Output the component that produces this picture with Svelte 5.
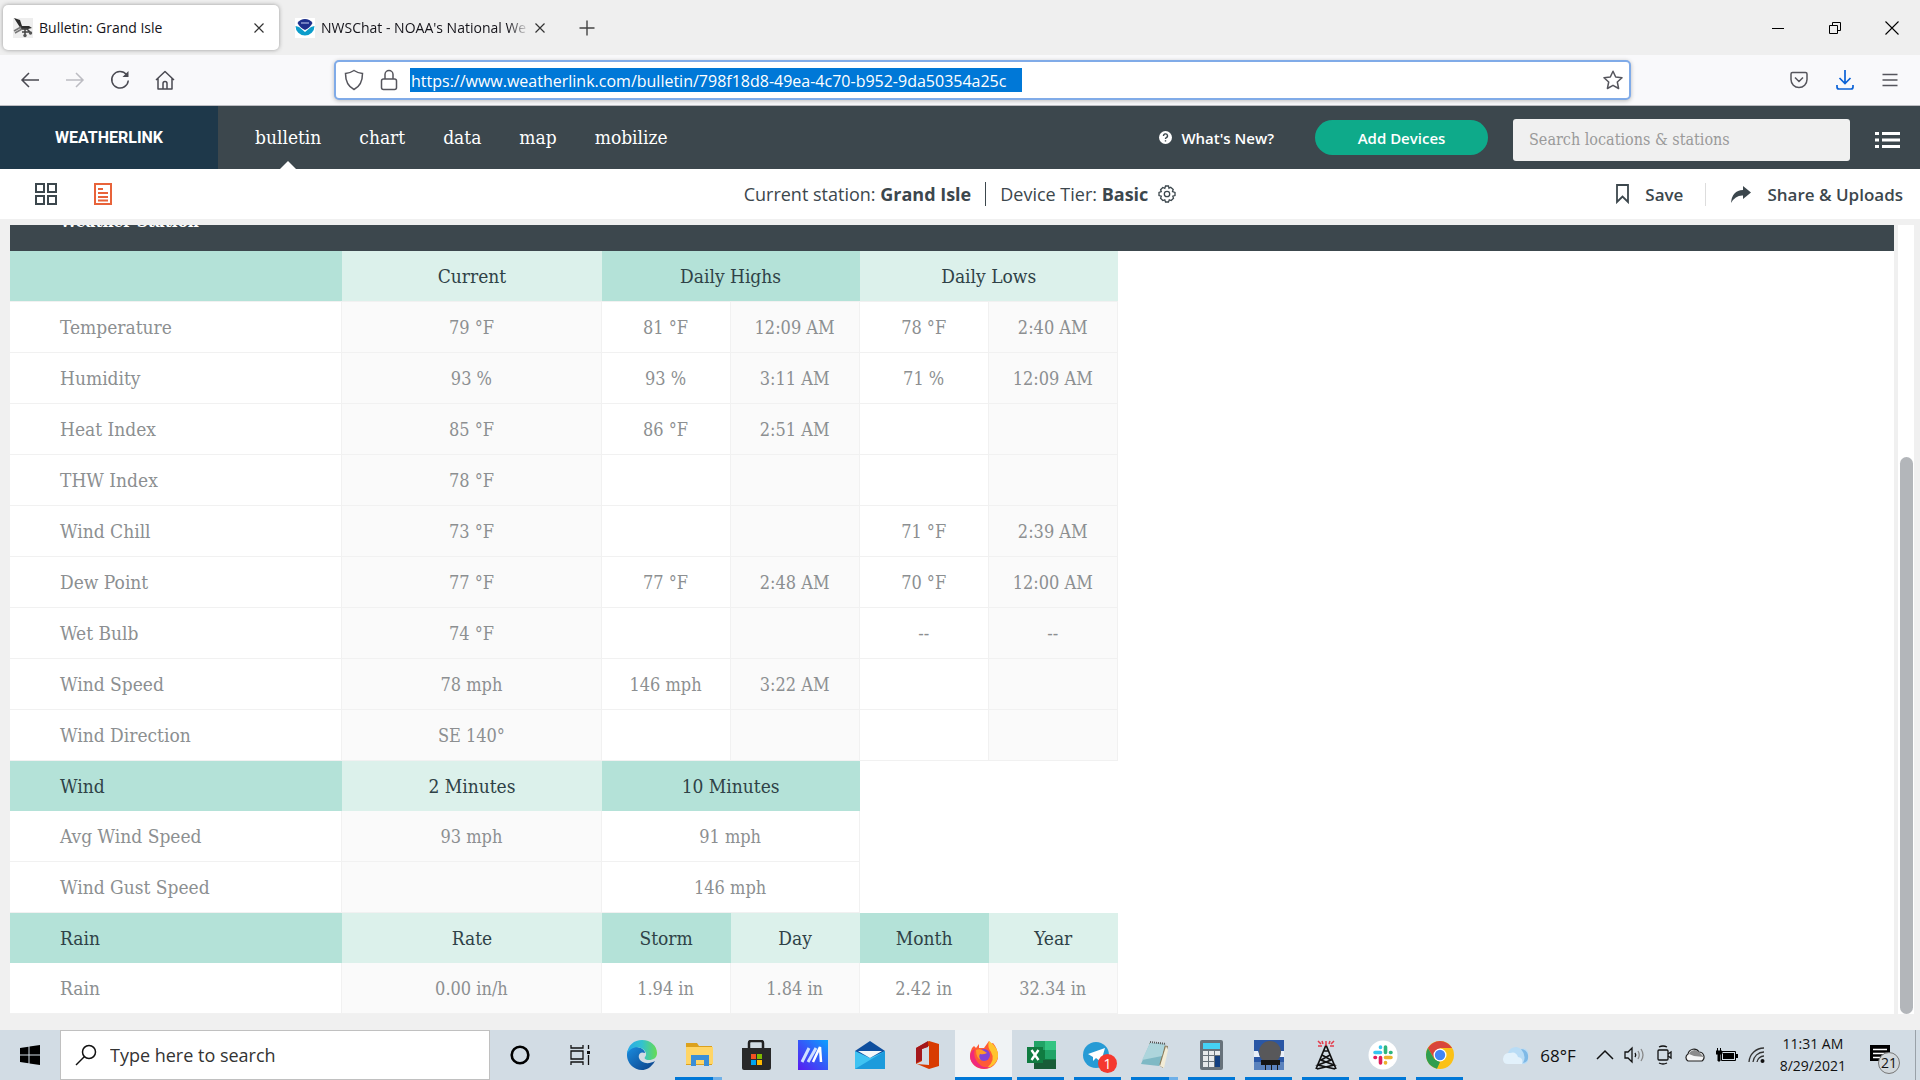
<script lang="ts">
	type Row = { label: string; cells: string[] };

	const navLinks = ['bulletin', 'chart', 'data', 'map', 'mobilize'];

	const conditions: Row[] = [
		{ label: 'Temperature', cells: ['79 °F', '81 °F', '12:09 AM', '78 °F', '2:40 AM'] },
		{ label: 'Humidity', cells: ['93 %', '93 %', '3:11 AM', '71 %', '12:09 AM'] },
		{ label: 'Heat Index', cells: ['85 °F', '86 °F', '2:51 AM', '', ''] },
		{ label: 'THW Index', cells: ['78 °F', '', '', '', ''] },
		{ label: 'Wind Chill', cells: ['73 °F', '', '', '71 °F', '2:39 AM'] },
		{ label: 'Dew Point', cells: ['77 °F', '77 °F', '2:48 AM', '70 °F', '12:00 AM'] },
		{ label: 'Wet Bulb', cells: ['74 °F', '', '', '--', '--'] },
		{ label: 'Wind Speed', cells: ['78 mph', '146 mph', '3:22 AM', '', ''] },
		{ label: 'Wind Direction', cells: ['SE 140°', '', '', '', ''] }
	];

	const wind: Row[] = [
		{ label: 'Avg Wind Speed', cells: ['93 mph', '91 mph'] },
		{ label: 'Wind Gust Speed', cells: ['', '146 mph'] }
	];

	const rainHeads = ['Rate', 'Storm', 'Day', 'Month', 'Year'];
	const rain = ['0.00 in/h', '1.94 in', '1.84 in', '2.42 in', '32.34 in'];

	// open: underline below the icon, group: several windows, active: focused window
	const apps = [
		{ id: 'edge', name: 'Edge', state: '' },
		{ id: 'files', name: 'File Explorer', state: 'open group' },
		{ id: 'store', name: 'Store', state: '' },
		{ id: 'myasus', name: 'MyASUS', state: '' },
		{ id: 'mail', name: 'Mail', state: '' },
		{ id: 'office', name: 'Office', state: '' },
		{ id: 'firefox', name: 'Firefox', state: 'open active' },
		{ id: 'excel', name: 'Excel', state: 'open' },
		{ id: 'telegram', name: 'Telegram', state: 'open' },
		{ id: 'notepad', name: 'Notepad', state: 'open group' },
		{ id: 'calc', name: 'Calculator', state: 'open' },
		{ id: 'radar', name: 'Radar', state: 'open' },
		{ id: 'tower', name: 'Tower', state: 'open' },
		{ id: 'slack', name: 'Slack', state: 'open' },
		{ id: 'chrome', name: 'Chrome', state: 'open' }
	];

	let url = $state('https://www.weatherlink.com/bulletin/798f18d8-49ea-4c70-b952-9da50354a25c');
	let query = $state('');
</script>

<div class="screen">
	<header class="tabs">
		<div class="tab active">
			<svg width="20" height="20" viewBox="0 0 20 20" aria-hidden="true">
				<rect width="20" height="20" fill="#eee" />
				<path d="M1 0 7 2 9 8 16 8 19 10 13 11.500 8 11Z" fill="#2c2c2c" />
				<path d="M9 11 2 15M8 9 1 13" stroke="#777" stroke-width="1.500" fill="none" />
				<path d="M9 11H14L17 14M12 11V17M9 14H17" stroke="#444" stroke-width="1.500" fill="none" />
				<circle cx="12" cy="17.500" r="1.700" fill="#555" /><circle cx="17.500" cy="15" r="1.700" fill="#555" />
			</svg>
			<span class="title">Bulletin: Grand Isle</span>
			<button class="plain" aria-label="Close tab">
				<svg width="10" height="10" viewBox="0 0 10 10"><path d="M.5 .5 9.500 9.500M9.500 .5 .5 9.500" stroke="#333" stroke-width="1.200" /></svg>
			</button>
		</div>
		<div class="tab">
			<svg width="20" height="20" viewBox="0 0 20 20" aria-hidden="true">
				<rect width="20" height="20" fill="#fff" />
				<path d="M2.500 5A9 9 0 0 1 17.500 5Q15 10 10 12Q5 10 2.500 5Z" fill="#1d2f8c" />
				<path d="M.5 8 4 9 10 14 16 9 19.500 8A9.500 9.500 0 0 1 .5 8Z" fill="#0c9dcb" />
				<path d="M6 5H14" stroke="#8d9ad0" stroke-width="1.500" />
			</svg>
			<span class="title fade">NWSChat - NOAA's National We</span>
			<button class="plain" aria-label="Close tab">
				<svg width="10" height="10" viewBox="0 0 10 10"><path d="M.5 .5 9.500 9.500M9.500 .5 .5 9.500" stroke="#333" stroke-width="1.200" /></svg>
			</button>
		</div>
		<button class="plain new" aria-label="New tab">
			<svg width="16" height="16" viewBox="0 0 16 16"><path d="M8 .5V15.500M.5 8H15.500" stroke="#444" stroke-width="1.400" /></svg>
		</button>
		<div class="window">
			<button class="plain" aria-label="Minimize">
				<svg width="14" height="14" viewBox="0 0 14 14"><path d="M1 7.500H13" stroke="#000" /></svg>
			</button>
			<button class="plain" aria-label="Restore">
				<svg width="14" height="14" viewBox="0 0 14 14"><path d="M1.500 4.500H9.500V12.500H1.500ZM4.500 4V1.500H12.500V9.500H10" stroke="#000" fill="none" /></svg>
			</button>
			<button class="plain" aria-label="Close">
				<svg width="14" height="14" viewBox="0 0 14 14"><path d="M.5 .5 13.500 13.500M13.500 .5 .5 13.500" stroke="#000" stroke-width="1.100" /></svg>
			</button>
		</div>
	</header>

	<div class="toolbar">
		<div class="history">
			<button class="plain" aria-label="Back">
				<svg width="20" height="20" viewBox="0 0 20 20" fill="none" stroke="#4a4a52" stroke-width="1.500"><path d="M19 10H2M9 3 2 10 9 17" /></svg>
			</button>
			<button class="plain" aria-label="Forward" disabled>
				<svg width="20" height="20" viewBox="0 0 20 20" fill="none" stroke="#bcbcc2" stroke-width="1.500"><path d="M1 10H18M11 3 18 10 11 17" /></svg>
			</button>
			<button class="plain" aria-label="Reload">
				<svg width="20" height="20" viewBox="0 0 20 20" fill="none" stroke="#4a4a52" stroke-width="1.500"><path d="M16.500 4.500A8.300 8.300 0 1 0 18.300 10.500" /><path d="M18.500 1V7H12.500Z" fill="#4a4a52" stroke="none" /></svg>
			</button>
			<button class="plain" aria-label="Home">
				<svg width="20" height="20" viewBox="0 0 20 20" fill="none" stroke="#4a4a52" stroke-width="1.500" stroke-linejoin="round"><path d="M1 10 10 1.500 19 10M3 8.500V19H17V8.500M8 19V13.500A2 2 0 0 1 12 13.500V19" /></svg>
			</button>
		</div>
		<div class="address">
			<svg width="20" height="22" viewBox="0 0 20 22" fill="none" stroke="#55555c" stroke-width="1.500" aria-hidden="true"><path d="M10 1.500C7 3.500 4 4.300 1.500 4.500C1.500 12 4 17.500 10 20.500C16 17.500 18.500 12 18.500 4.500C16 4.300 13 3.500 10 1.500Z" /></svg>
			<svg width="18" height="22" viewBox="0 0 18 22" fill="none" stroke="#55555c" stroke-width="1.500" aria-hidden="true"><rect x="1.500" y="10" width="15" height="10.500" rx="2" /><path d="M5 10V5.500A4 4 0 0 1 13 5.500V10" /></svg>
			<div class="url"><input aria-label="Address" bind:value={url} /></div>
			<button class="plain" aria-label="Bookmark this page">
				<svg width="20" height="20" viewBox="0 0 20 20" fill="none" stroke="#55555c" stroke-width="1.500" stroke-linejoin="round"><path d="M10 1.300 12.700 7 19 7.800 14.300 12 15.600 18.500 10 15.300 4.400 18.500 5.700 12 1 7.800 7.300 7Z" /></svg>
			</button>
		</div>
		<div class="tools">
			<button class="plain" aria-label="Pocket">
				<svg width="18" height="18" viewBox="0 0 18 18" fill="none" stroke="#55555c" stroke-width="1.500"><path d="M2.500 1.500H15.500Q17 1.500 17 3V8.500A8 8 0 0 1 1 8.500V3Q1 1.500 2.500 1.500ZM5 6.500 9 10.500 13 6.500" /></svg>
			</button>
			<button class="plain" aria-label="Downloads">
				<svg width="18" height="20" viewBox="0 0 18 20" fill="none" stroke="#0a62d6" stroke-width="1.700"><path d="M9 0V13M3.500 8 9 13.500 14.500 8M1 15V17Q1 19 3 19H15Q17 19 17 17V15" /></svg>
			</button>
			<button class="plain" aria-label="Menu">
				<svg width="16" height="14" viewBox="0 0 16 14" stroke="#55555c" stroke-width="1.300"><path d="M.5 1.500H15.500M.5 7H15.500M.5 12.500H15.500" /></svg>
			</button>
		</div>
	</div>

	<nav class="site">
		<a class="brand" href="#home">WEATHERLINK</a>
		<div class="links">
			{#each navLinks as link, i}
				<a href="#{link}" class:current={i === 0}>{link}</a>
			{/each}
		</div>
		<a class="news" href="#news">
			<svg width="13" height="13" viewBox="0 0 13 13" aria-hidden="true"><circle cx="6.500" cy="6.500" r="6.500" fill="#fff" /><path d="M4.500 5A2 2 0 1 1 7 6.800Q6.500 7 6.500 8M6.500 9.200V10.500" fill="none" stroke="#3c474d" stroke-width="1.400" /></svg>
			What's New?
		</a>
		<button class="add">Add Devices</button>
		<div class="lookup">
			<input class="search" aria-label="Search" placeholder="Search locations & stations" bind:value={query} />
			<button class="plain" aria-label="Station list">
				<svg width="25" height="16" viewBox="0 0 25 16" fill="#fff"><path d="M0 0H4V3H0ZM7 0H25V3H7ZM0 6.500H4V9.500H0ZM7 6.500H25V9.500H7ZM0 13H4V16H0ZM7 13H25V16H7Z" /></svg>
			</button>
		</div>
	</nav>

	<div class="subnav">
		<div class="views">
			<button class="plain" aria-label="Tiles">
				<svg width="22" height="22" viewBox="0 0 22 22" fill="none" stroke="#3c474d" stroke-width="2"><path d="M1 1H9V9H1ZM13 1H21V9H13ZM1 13H9V21H1ZM13 13H21V21H13Z" /></svg>
			</button>
			<button class="plain" aria-label="Bulletin">
				<svg width="18" height="22" viewBox="0 0 18 22" fill="none" stroke="#e8633a" stroke-width="2"><path d="M1 1H17V21H1ZM4 6H9M4 10H14M4 14H14M4 17.500H14" /></svg>
			</button>
		</div>
		<div class="station">
			<span>Current station: <b>Grand Isle</b></span>
			<span class="tier">Device Tier: <b>Basic</b></span>
			<button class="plain" aria-label="Tier settings">
				<svg width="18" height="18" viewBox="0 0 18 18" fill="none" stroke="#3c474d" stroke-width="1.300"><path d="M7.500 1H10.500L11 3.200 12.700 2.300 15.200 4.500 14.500 6.600 17 7.500V10.500L14.800 11.200 15.500 13.300 13.200 15.500 11.300 14.800 10.500 17H7.500L6.800 14.800 4.800 15.500 2.600 13.300 3.300 11.200 1 10.500V7.500L3.300 6.700 2.600 4.700 4.800 2.500 6.800 3.300Z" /><circle cx="9" cy="9" r="2.700" /></svg>
			</button>
		</div>
		<div class="actions">
			<button class="action">
				<svg width="13" height="20" viewBox="0 0 13 20" fill="none" stroke="#3c474d" stroke-width="1.800"><path d="M1 1H12V18L6.500 12.500 1 18Z" /></svg>
				Save
			</button>
			<button class="action share">
				<svg width="20" height="17" viewBox="0 0 20 17" fill="#3c474d"><path d="M12 0 20 6.500 12 13V9.500Q4.500 9 0 17Q1 4.500 12 4Z" /></svg>
				Share & Uploads
			</button>
		</div>
	</div>

	<main>
		<section class="panel">
			<div class="heading"><h2>Weather Station</h2></div>
			<table>
				<colgroup>
					<col class="name" /><col class="wide" /><col /><col /><col /><col />
				</colgroup>
				<thead>
					<tr class="head">
						<td class="dark"></td>
						<th>Current</th>
						<th class="dark" colspan="2">Daily Highs</th>
						<th colspan="2">Daily Lows</th>
					</tr>
				</thead>
				<tbody>
					{#each conditions as row}
						<tr>
							<th scope="row">{row.label}</th>
							{#each row.cells as cell, i}
								<td class:shade={i % 2 === 0}>{cell}</td>
							{/each}
						</tr>
					{/each}
				</tbody>
				<tbody>
					<tr class="head">
						<th class="dark">Wind</th>
						<th>2 Minutes</th>
						<th class="dark" colspan="2">10 Minutes</th>
					</tr>
					{#each wind as row}
						<tr>
							<th scope="row">{row.label}</th>
							<td class="shade">{row.cells[0]}</td>
							<td colspan="2">{row.cells[1]}</td>
						</tr>
					{/each}
				</tbody>
				<tbody>
					<tr class="head">
						<th class="dark">Rain</th>
						{#each rainHeads as head, i}
							<th class:dark={i % 2 === 1}>{head}</th>
						{/each}
					</tr>
					<tr>
						<th scope="row">Rain</th>
						{#each rain as cell, i}
							<td class:shade={i % 2 === 0}>{cell}</td>
						{/each}
					</tr>
				</tbody>
			</table>
		</section>
		<div class="scrollbar"><div class="thumb"></div></div>
	</main>

	<footer class="taskbar">
		<button class="plain start" aria-label="Start">
			<svg width="20" height="20" viewBox="0 0 20 20"><path d="M0 3 8.500 1.800V9.500H0ZM9.500 1.600 20 0V9.500H9.500ZM0 10.500H8.500V18.200L0 17ZM9.500 10.500H20V20L9.500 18.400Z" /></svg>
		</button>
		<label class="find">
			<svg width="22" height="22" viewBox="0 0 22 22" fill="none" stroke="#111" stroke-width="1.500"><circle cx="14" cy="8" r="6.500" /><path d="M9.500 12.500 1 21" /></svg>
			<input placeholder="Type here to search" />
		</label>
		<button class="plain sys" aria-label="Cortana">
			<svg width="20" height="20" viewBox="0 0 20 20"><circle cx="10" cy="10" r="8.300" fill="none" stroke="#000" stroke-width="2.600" /></svg>
		</button>
		<button class="plain sys" aria-label="Task view">
			<svg width="21" height="20" viewBox="0 0 21 20" fill="none" stroke="#111" stroke-width="1.300"><path d="M1 0V3H13V0M1 6H13V14H1ZM1 20V17H13V20M18.500 0V4M18.500 10V20" /><path d="M17 6H20V9H17Z" fill="#111" stroke="none" /></svg>
		</button>

		<div class="apps">
			{#each apps as app}
				<button class="plain app {app.state}" aria-label={app.name}>
					<svg width="30" height="30" viewBox="0 0 30 30">
						{#if app.id === 'edge'}
							<defs>
								<linearGradient id="edge-top"><stop stop-color="#2aa9e8" /><stop offset=".5" stop-color="#33c2cf" /><stop offset="1" stop-color="#67dc52" /></linearGradient>
								<linearGradient id="edge-low" x2="1" y2="1"><stop stop-color="#1a8de0" /><stop offset="1" stop-color="#0c3f86" /></linearGradient>
							</defs>
							<path d="M0 14C0 9 5 6 10 7C16 8 18 11 18 13C13 11 11 15 12 18C14 23 21 25 28 21C24 28 19 30 15 30A15 15 0 0 1 0 14Z" fill="url(#edge-low)" />
							<path d="M0 14C1 5 7 0 15 0C24 0 30 6 30 13C30 18 26 20 22 20C18 20 17 18 18 17C20 15 19 12 17 10C12 5 3 7 0 14Z" fill="url(#edge-top)" />
						{:else if app.id === 'files'}
							<path d="M2 3H13L15 6H28V25H2Z" fill="#dca11d" />
							<path d="M2 7H29V24H2Z" fill="#ffd566" />
							<path d="M7 15H25V26H20V20H12V26H7Z" fill="#3b8ed6" />
						{:else if app.id === 'store'}
							<path d="M8 10V3Q8 1 10 1H20Q22 1 22 3V10" fill="none" stroke="#222" stroke-width="2.500" />
							<path d="M1 8H30V28Q30 30 28 30H3Q1 30 1 28Z" fill="#292929" />
							<path d="M10 14H15V19H10Z" fill="#f25022" /><path d="M16 14H21V19H16Z" fill="#7fba00" />
							<path d="M10 20H15V25H10Z" fill="#00a4ef" /><path d="M16 20H21V25H16Z" fill="#ffb900" />
						{:else if app.id === 'myasus'}
							<defs><linearGradient id="asus" x1="0" y1="1" x2="1" y2="0"><stop stop-color="#5a1cf0" /><stop offset=".5" stop-color="#3558f8" /><stop offset="1" stop-color="#0aa2ff" /></linearGradient></defs>
							<path d="M0 0H30V30H0Z" fill="url(#asus)" />
							<path d="M4 22 11 8M10 22 18 8" stroke="#cfe0ff" stroke-width="3" /><path d="M15 22 22 7 23 22" fill="none" stroke="#fff" stroke-width="2.500" />
						{:else if app.id === 'mail'}
							<path d="M0 11 15 1 30 11V22H0Z" fill="#0f4f9e" />
							<path d="M0 11 15 18 30 11V29H0Z" fill="#3fc3f2" /><path d="M0 29 30 11V29Z" fill="#1c9bdc" />
							<path d="M3 11H27L15 18Z" fill="#f4f7fa" />
						{:else if app.id === 'office'}
							<path d="M4 8 17 1 27 4V26L17 29 5 24 17 25V6L10 9V21L4 24Z" fill="#d83b01" />
							<path d="M4 8 16 1V7L10 9V20L4 23Z" fill="#a4171b" />
						{:else if app.id === 'firefox'}
							<path d="M3 8 5 6 7 8 10 4V8H15L20 1 22 4 24 3Q29 9 29 16A14 13 0 0 1 1 16Q1 12 3 8Z" fill="#ff5a36" />
							<path d="M20 1Q30 8 29 17Q27 26 18 28Q27 20 22 12Q18 7 20 1Z" fill="#ffc42e" />
							<path d="M1 16A14 13 0 0 0 22 27Q12 29 7 20Q4 14 6 9Q1 11 1 16Z" fill="#f0297c" />
							<circle cx="15" cy="15" r="6" fill="#8043d8" /><path d="M7 10Q11 8 15 11L18 13Q14 15 11 14Q9 17 12 20Q7 18 7 10Z" fill="#ff9b28" />
						{:else if app.id === 'excel'}
							<path d="M8 1H30V29H8Z" fill="#107c41" /><path d="M8 1H19V10H8Z" fill="#21a366" /><path d="M19 1H30V10H19Z" fill="#33c481" />
							<path d="M19 10H30V19H19Z" fill="#21a366" /><path d="M8 20H30V29H8Z" fill="#185c37" />
							<path d="M1 7H17V23H1Z" fill="#107c41" /><path d="M5.500 10 12.500 20M12.500 10 5.500 20" stroke="#fff" stroke-width="2.400" />
						{:else if app.id === 'telegram'}
							<circle cx="13" cy="15" r="13" fill="#279bd5" /><path d="M5 14 22 8 18 22 13 18 10 21V17Z" fill="#fff" />
						{:else if app.id === 'notepad'}
							<path d="M9 3 28 6 23 28 20 26Z" fill="#8a7a5a" /><path d="M10 3 25 4 19 26 1 24Z" fill="#7fb9c5" /><path d="M10 3 25 4 22 16 2 20Z" fill="#add5dc" />
							<path d="M26 6 20 26 24 28 28 10Z" fill="#f2ecd6" /><path d="M10 2 26 4" stroke="#555" stroke-width="2" stroke-dasharray="1 1" />
						{:else if app.id === 'calc'}
							<rect x="3" width="23" height="30" rx="2" fill="#68727a" /><path d="M6 3H23V9H6Z" fill="#45d2f4" />
							<path d="M6 11H11V15H6ZM12 11H17V15H12ZM18 11H23V15H18ZM6 16H11V21H6ZM12 16H17V21H12ZM6 22H11V27H6ZM12 22H17V27H12Z" fill="#e6e9eb" /><path d="M18 16H23V27H18Z" fill="#123f80" />
						{:else if app.id === 'radar'}
							<path d="M0 0H30V30H0Z" fill="#2a57a5" /><path d="M0 11H4L6 17H0ZM25 11H30V17H25Z" fill="#e9eff8" /><path d="M0 22H30V30H0Z" fill="#5a82bd" />
							<circle cx="16" cy="12" r="11" fill="#58585a" /><path d="M7 20H26V25H24V30H23V25H18V30H17V25H12V30H11V25H7Z" fill="#151515" />
						{:else if app.id === 'tower'}
							<path d="M15 5 5 29M15 5 25 29M12 11H18M11 15 20 20 7 25 24 29M19 15 10 20 23 25 6 29" stroke="#111" stroke-width="1.700" fill="none" />
							<path d="M15 1V6M11 1 12 4M7 1 10 4M7 6H11M19 1 18 4M23 1 20 4M23 6H19" stroke="#e33b4b" stroke-width="1.500" />
						{:else if app.id === 'slack'}
							<circle cx="15" cy="15" r="14.500" fill="#fff" />
							<g fill="none" stroke-width="3.600" stroke-linecap="round">
								<path d="M12.500 7V7.500M7 12.500H12.500" stroke="#36c5f0" /><path d="M17.500 7V12.500M23 12.500H22.500" stroke="#2eb67d" />
								<path d="M17.500 23V22.500M17.500 17.500H23" stroke="#ecb22e" /><path d="M12.500 17.500V23M7 17.500H7.500" stroke="#e01e5a" />
							</g>
						{:else}
							<circle cx="15" cy="15" r="14" fill="#fbc116" /><path d="M2.900 8A14 14 0 0 1 27.100 8H15L9 18.500Z" fill="#d9453a" />
							<path d="M2.900 8 9 18.500 15 22 12 28.700A14 14 0 0 1 2.900 8Z" fill="#2f9e4f" /><circle cx="15" cy="15" r="6.500" fill="#fff" /><circle cx="15" cy="15" r="5.200" fill="#4285f4" />
						{/if}
					</svg>
					{#if app.id === 'telegram'}<span class="badge">1</span>{/if}
				</button>
			{/each}
		</div>

		<div class="tray">
			<div class="weather">
				<svg width="28" height="22" viewBox="0 0 28 22" aria-hidden="true"><path d="M6 20A6 6 0 0 1 6 9A8 8 0 0 1 19 5A5 5 0 0 1 26 11V17Q25 20 21 20Z" fill="#b9dcf5" /><path d="M1 15A6 6 0 0 1 8 9Q14 7 16 13Q22 14 20 20H6Q1 20 1 15Z" fill="#e2f1fb" /><path d="M19 5A7 7 0 0 1 26 11Q27 18 21 19Q25 12 19 5Z" fill="#7fb9e6" /></svg>
				<span>68°F</span>
			</div>
			<div class="icons">
				<svg width="18" height="18" viewBox="0 0 18 18" fill="none" stroke="#111" stroke-width="1.500"><path d="M1 13 9 5 17 13" /></svg>
				<svg width="22" height="18" viewBox="0 0 22 18" fill="none" stroke="#111" stroke-width="1.300"><path d="M1 6H4L8 2V16L4 12H1ZM11 7Q12.500 9 11 11" /><path d="M14 5Q16.500 9 14 13M17 3Q21 9 17 15" stroke="#888" /></svg>
				<svg width="18" height="20" viewBox="0 0 18 20" fill="none" stroke="#111" stroke-width="1.300"><rect x="2" y="5" width="10" height="10" rx="1" /><path d="M12 9 15 7V13L12 11M3 2Q7 0 11 2M3 18Q7 20 11 18" /></svg>
				<svg width="22" height="16" viewBox="0 0 22 16" stroke="#222" stroke-width="1.200"><path d="M4 14A4 4 0 0 1 4 7A6 6 0 0 1 15 5A5 5 0 0 1 18 14Z" fill="#f5f5f5" /><path d="M5 7A6 6 0 0 1 15 5L20 10 10 9Z" fill="#8b8b8b" stroke="none" /></svg>
				<svg width="22" height="16" viewBox="0 0 22 16"><path d="M5.500 4.500H19.500V13.500H5.500Z" fill="none" stroke="#000" /><path d="M7 6H18V12H7ZM20 7H22V11H20Z" /><path d="M1.500 1V4M4.500 1V4M0 4H6V7H4V14H2V7H0Z" stroke="#000" /></svg>
				<svg width="18" height="18" viewBox="0 0 18 18" fill="none" stroke="#333" stroke-width="1.300"><path d="M1 16A15 15 0 0 1 16 2M5 16A11 11 0 0 1 16 6M9 16A7 7 0 0 1 16 10" /><circle cx="14.500" cy="15" r="2" fill="#111" stroke="none" /></svg>
			</div>
			<div class="clock"><span>11:31 AM</span><span>8/29/2021</span></div>
			<button class="plain notes" aria-label="Notifications">
				<svg width="20" height="20" viewBox="0 0 20 20"><path d="M0 0H20V16H13V20L9 16H0Z" /><path d="M3 4.500H17M3 8.500H17M3 12.500H10" stroke="#fff" stroke-width="1.300" /></svg>
				<span class="count">21</span>
			</button>
			<button class="plain peek" aria-label="Show desktop"></button>
		</div>
	</footer>
</div>

<style>
	:global(body) {
		margin: 0;
		background: #f0f0f0;
	}
	.screen {
		display: flex;
		flex-direction: column;
		min-height: 100vh;
		font-family: 'Open Sans', 'Noto Sans', sans-serif;
		color: #3c474d;
	}
	.screen * {
		box-sizing: border-box;
	}
	svg {
		display: block;
		flex: none;
	}
	input,
	button {
		font: inherit;
		color: inherit;
	}
	a {
		color: inherit;
		text-decoration: none;
	}
	.plain {
		display: grid;
		place-items: center;
		border: 0;
		padding: 0;
		background: none;
		flex: none;
	}

	.tabs {
		display: flex;
		align-items: center;
		height: 55px;
		padding-left: 3px;
		background: #efefef;
		color: #15141a;
		font-size: 14px;
	}
	.tab {
		display: flex;
		align-items: center;
		gap: 6px;
		width: 276px;
		height: 45px;
		padding: 0 15px 0 10px;
		border-radius: 5px;
	}
	.tab.active {
		background: #fff;
		box-shadow: 0 0 4px #999;
	}
	.tab:nth-child(2) {
		padding-left: 16px;
		padding-right: 10px;
	}
	.title {
		flex: 1;
		white-space: nowrap;
	}
	.fade {
		mask-image: linear-gradient(to right, #000 90%, transparent);
	}
	.new {
		width: 64px;
		height: 40px;
	}
	.window {
		display: flex;
		gap: 43px;
		margin-left: auto;
		padding-right: 21px;
	}

	.toolbar {
		display: flex;
		align-items: center;
		height: 51px;
		background: #f9f9fb;
		border-bottom: 1px solid #bdbdc2;
	}
	.history {
		display: flex;
		gap: 25px;
		width: 334px;
		padding-left: 20px;
	}
	.address {
		display: flex;
		align-items: center;
		gap: 16px;
		flex: 1;
		height: 40px;
		padding: 0 6px 0 8px;
		border: 2px solid #80abe8;
		border-radius: 5px;
		background: #fff;
		box-shadow: 0 1px 4px #bbb;
	}
	.url {
		flex: 1;
		margin-left: -4px;
	}
	.url input {
		width: 612px;
		height: 24px;
		border: 0;
		padding: 2px 1px 0;
		background: #0078d7;
		color: #fff;
		font-size: 16px;
	}
	.tools {
		display: flex;
		align-items: center;
		justify-content: flex-end;
		gap: 28px;
		width: 289px;
		padding-right: 22px;
	}

	.site {
		display: flex;
		align-items: center;
		height: 63px;
		padding-right: 20px;
		background: #3c474d;
		color: #fff;
	}
	.brand {
		display: grid;
		place-items: center;
		width: 218px;
		height: 63px;
		background: #1e384a;
		font-family: Roboto, sans-serif;
		font-size: 16px;
		font-weight: bold;
	}
	.links {
		display: flex;
		flex: 1;
		gap: 38px;
		padding-left: 37px;
		font-family: 'DejaVu Serif Condensed', 'DejaVu Serif', serif;
		font-size: 19px;
	}
	.links a {
		position: relative;
		line-height: 63px;
	}
	.links .current::after {
		content: '';
		position: absolute;
		bottom: 0;
		left: 50%;
		margin-left: -8px;
		border: 8px solid transparent;
		border-top: 0;
		border-bottom-color: #fff;
	}
	.news {
		display: flex;
		align-items: center;
		gap: 9px;
		font-size: 15px;
		font-weight: 600;
	}
	.add {
		width: 173px;
		height: 35px;
		margin: 0 25px 0 41px;
		border: 0;
		border-radius: 18px;
		background: #0eaa8a;
		font-size: 15px;
		font-weight: 600;
	}
	.lookup {
		display: flex;
		align-items: center;
		gap: 25px;
		padding-top: 4px;
	}
	.search {
		width: 337px;
		height: 42px;
		padding: 0 16px;
		border: 0;
		border-radius: 3px;
		background: #f0f0f0;
		color: #3c474d;
		font-family: 'DejaVu Serif Condensed', 'DejaVu Serif', serif;
		font-size: 16px;
	}
	.search::placeholder {
		color: #9a9a9a;
	}

	.subnav {
		display: grid;
		grid-template-columns: 1fr auto 1fr;
		align-items: center;
		height: 50px;
		padding: 0 17px;
		background: #fff;
		font-size: 18px;
	}
	.views {
		display: flex;
		gap: 37px;
		padding-left: 18px;
	}
	.station {
		display: flex;
		align-items: center;
		gap: 10px;
	}
	.tier {
		margin-left: 4px;
		padding-left: 14px;
		border-left: 1px solid #3c474d;
	}
	.actions {
		display: flex;
		justify-content: flex-end;
	}
	.action {
		display: flex;
		align-items: center;
		gap: 16px;
		border: 0;
		padding: 0;
		background: none;
		font-size: 17px;
		font-weight: 600;
	}
	.share {
		margin-left: 22px;
		padding-left: 25px;
		border-left: 1px solid #ddd;
	}

	main {
		display: flex;
		flex: 1;
		padding: 6px 6px 16px 10px;
	}
	.panel {
		flex: 1;
		background: #fff;
	}
	.heading {
		display: flex;
		align-items: flex-start;
		height: 26px;
		padding-left: 50px;
		overflow: hidden;
		background: #3c474d;
		color: #fff;
	}
	h2 {
		margin: -16px 0 0;
		font: bold 17px/24px 'DejaVu Serif Condensed', 'DejaVu Serif', serif;
	}
	table {
		width: 58.8%;
		min-width: 900px;
		table-layout: fixed;
		border-spacing: 0;
		font-family: 'DejaVu Serif Condensed', 'DejaVu Serif', serif;
		font-size: 18px;
	}
	.name {
		width: 30%;
	}
	.wide {
		width: 23.4%;
	}
	td,
	th {
		height: 51px;
		padding: 0;
		border: 1px solid #f1f1f1;
		border-width: 0 1px 1px 0;
		color: #8c8f91;
		font-weight: normal;
		text-align: center;
	}
	th {
		font-size: 19px;
	}
	th:first-child {
		padding-left: 50px;
		text-align: left;
	}
	.shade {
		background: #fafafa;
	}
	.head th,
	.head td {
		height: 50px;
		border: 0;
		background: #dcf1eb;
		color: #2f4247;
	}
	thead .head th,
	thead .head td {
		height: 51px;
		border-bottom: 1px solid #f1f1f1;
	}
	.head .dark {
		background: #b4e2d8;
	}
	.scrollbar {
		width: 16px;
		margin-left: 4px;
		padding: 232px 1px 0 2px;
		background: #fff;
	}
	.thumb {
		height: 100%;
		border-radius: 7px;
		background: #b3b6ba;
	}

	.taskbar {
		display: flex;
		height: 50px;
		background: #d2dce4;
		color: #111;
	}
	.start {
		width: 60px;
	}
	.find {
		display: flex;
		align-items: center;
		gap: 13px;
		width: 430px;
		padding-left: 14px;
		border: 1px solid #c0c0c0;
		background: #fff;
	}
	.find input {
		flex: 1;
		border: 0;
		padding: 0;
		font-size: 18px;
	}
	.find input::placeholder {
		color: #333;
	}
	.sys {
		width: 60px;
	}
	.apps {
		display: flex;
		margin-left: 3px;
	}
	.app {
		position: relative;
		width: 57px;
	}
	.active {
		background: #f0f3f5;
	}
	.app.open::after {
		content: '';
		position: absolute;
		inset: auto 5px 0;
		height: 3px;
		background: #0078d7;
	}
	.app.active::after {
		inset: auto 0 0;
	}
	.app.group::after {
		background: linear-gradient(to right, #0078d7 80%, #6fb0e8 80%);
	}
	.badge {
		position: absolute;
		right: 9px;
		bottom: 7px;
		width: 19px;
		border-radius: 10px;
		background: #f5392f;
		color: #fff;
		font-size: 14px;
		line-height: 19px;
	}
	.tray {
		display: flex;
		align-items: center;
		gap: 20px;
		margin-left: auto;
	}
	.weather,
	.icons {
		display: flex;
		align-items: center;
		gap: 10px;
		font-size: 17px;
	}
	.clock {
		display: grid;
		margin: 0 4px 0 -6px;
		font-size: 14px;
		line-height: 22px;
		text-align: center;
	}
	.notes {
		position: relative;
		width: 30px;
		height: 30px;
		justify-items: start;
	}
	.count {
		position: absolute;
		right: 0;
		bottom: -4px;
		width: 22px;
		border: 1px solid #777;
		border-radius: 12px;
		background: #d2d8dc;
		font-size: 14px;
		line-height: 20px;
	}
	.peek {
		width: 5px;
		height: 50px;
		margin-left: -5px;
		border-left: 1px solid #99a1a8;
	}
</style>
